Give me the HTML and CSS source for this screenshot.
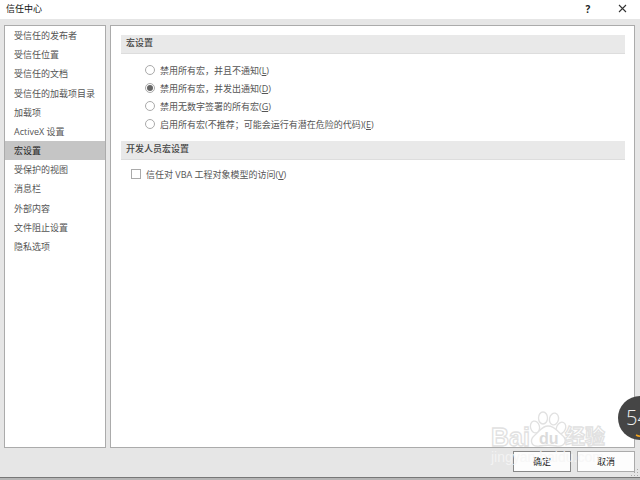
FILE: index.html
```html
<!DOCTYPE html>
<html lang="zh-CN">

<head>
    <meta charset="utf-8">
    <title>信任中心</title>
    <link rel="stylesheet" href="styles.css">
</head>

<body>

    <div class="dialog">
        <header class="titlebar">
            <h1>信任中心</h1>
            <button class="help" aria-label="帮助">?</button>
            <button class="close" aria-label="关闭">
                <svg width="9" height="9" viewBox="0 0 9 9"><path d="M1 1L8 8M8 1L1 8" stroke="#333" stroke-width="1.1"/></svg>
            </button>
        </header>

        <div class="content">
            <nav class="sidebar">
                <ul>
                    <li><a href="#">受信任的发布者</a></li>
                    <li><a href="#">受信任位置</a></li>
                    <li><a href="#">受信任的文档</a></li>
                    <li><a href="#">受信任的加载项目录</a></li>
                    <li><a href="#">加载项</a></li>
                    <li><a href="#">ActiveX 设置</a></li>
                    <li class="active"><a href="#">宏设置</a></li>
                    <li><a href="#">受保护的视图</a></li>
                    <li><a href="#">消息栏</a></li>
                    <li><a href="#">外部内容</a></li>
                    <li><a href="#">文件阻止设置</a></li>
                    <li><a href="#">隐私选项</a></li>
                </ul>
            </nav>

            <main class="panel">
                <h2>宏设置</h2>
                <div class="options">
                    <label><input type="radio" name="macro"><span>禁用所有宏，并且不通知(<u>L</u>)</span></label>
                    <label><input type="radio" name="macro" checked><span>禁用所有宏，并发出通知(<u>D</u>)</span></label>
                    <label><input type="radio" name="macro"><span>禁用无数字签署的所有宏(<u>G</u>)</span></label>
                    <label><input type="radio" name="macro"><span>启用所有宏(不推荐；可能会运行有潜在危险的代码)(<u>E</u>)</span></label>
                </div>

                <h2>开发人员宏设置</h2>
                <label class="trust"><input type="checkbox"><span>信任对 VBA 工程对象模型的访问(<u>V</u>)</span></label>
            </main>
        </div>

        <footer class="buttons">
            <button class="ok">确定</button>
            <button>取消</button>
        </footer>
        <div class="taskbar"></div>

        <!-- Resize grip -->
        <svg class="grip" width="8" height="8" viewBox="0 0 8 8" fill="#aaa">
            <path d="M6 0h1v1h-1zM3 3h1v1h-1zM6 3h1v1h-1zM0 6h1v1h-1zM3 6h1v1h-1zM6 6h1v1h-1z"/>
        </svg>

        <!-- Watermark -->
        <svg class="watermark" width="130" height="60" viewBox="0 0 130 60">
            <g fill="#fff" stroke="#dcdcdc" stroke-width="1.3">
                <ellipse cx="46" cy="18" rx="4.5" ry="6" transform="rotate(-15 46 18)"/>
                <ellipse cx="54" cy="9" rx="4.5" ry="6"/>
                <ellipse cx="65" cy="10" rx="4.5" ry="6" transform="rotate(12 65 10)"/>
                <ellipse cx="72" cy="19" rx="4.5" ry="6" transform="rotate(24 72 19)"/>
                <path d="M59 17C53 17 51 22 46 26C40 31 42 38 50 37C56 36 62 36 68 37C76 38 79 31 73 26C68 22 66 17 59 17Z"/>
                <text class="mark-bai" x="2" y="37">Bai</text>
                <text class="mark-name" x="76" y="35">经验</text>
            </g>
            <text class="mark-du" x="50" y="35">du</text>
            <text class="mark-url" x="2" y="53">jingyan.baidu.com</text>
        </svg>

        <!-- Floating meter -->
        <div class="meter">
            <svg width="44" height="44" viewBox="0 0 44 44">
                <circle cx="22" cy="22" r="22" fill="#454545"/>
                <path d="M18 39Q22 41 26 40" fill="none" stroke="#f0a21c" stroke-width="1.5"/>
                <text class="meter-value" x="8" y="29">54</text>
            </svg>
        </div>
    </div>

</body>

</html>
```
FILE: styles.css
```css
* {
    box-sizing: border-box;
}

body {
    margin: 0;
    font-family: "Open Sans", "Noto Sans CJK SC", sans-serif;
    font-size: 9px;
    color: #555;
}

.dialog {
    position: relative;
    display: flex;
    flex-direction: column;
    min-height: 100vh;
    overflow: hidden;
    background-color: #e6e6e6;
}

.titlebar {
    display: flex;
    align-items: center;
    height: 19px;
    padding: 0 12px 2px 6px;
    background-color: #fff;
}

h1 {
    flex: 1;
    margin: 0;
    font-size: 9px;
    font-weight: normal;
    color: #111;
}

.titlebar button {
    display: flex;
    align-items: center;
    justify-content: center;
    width: 12px;
    height: 16px;
    padding: 0;
    border: none;
    background: none;
    color: #222;
    font-family: "Open Sans", sans-serif;
    font-size: 10px;
    font-weight: bold;
}

.titlebar .help {
    margin-right: 22px;
}

.content {
    flex: 1;
    display: flex;
    gap: 4px;
    padding: 6px 5px 0 4px;
}

.sidebar,
.panel {
    border: 1px solid #ababab;
    background-color: #fff;
}

.sidebar {
    width: 102px;
}

.sidebar ul {
    display: grid;
    grid-auto-rows: 1fr;
    height: 230px;
    margin: 0;
    padding: 0;
    list-style: none;
}

.sidebar a {
    display: flex;
    align-items: center;
    height: 100%;
    padding-left: 9px;
    color: #555;
    text-decoration: none;
    white-space: nowrap;
}

.sidebar .active {
    background-color: #c5c5c5;
}

.sidebar .active a {
    color: #222;
}

.panel {
    flex: 1;
    padding: 9px 9px 9px 10px;
}

h2 {
    height: 19px;
    margin: 0;
    padding-left: 5px;
    border-bottom: 1px solid #ddd;
    background-color: #e9e9e9;
    color: #444;
    font-size: 9px;
    font-weight: 500;
    line-height: 16px;
}

.options {
    padding: 7px 0 8px 24px;
}

label {
    display: flex;
    align-items: center;
    gap: 5px;
    height: 18px;
}

.trust {
    margin-top: 5px;
    padding-left: 10px;
}

input {
    display: grid;
    place-items: center;
    width: 10px;
    height: 10px;
    margin: 0;
    border: 1px solid #aaa;
    background-color: #fff;
    appearance: none;
}

input[type="radio"] {
    border-radius: 50%;
}

input[type="radio"]:checked::before {
    content: "";
    width: 6px;
    height: 6px;
    border-radius: 50%;
    background-color: #666;
}

.buttons {
    display: flex;
    justify-content: flex-end;
    gap: 6px;
    padding: 3px 5px 5px;
}

.buttons button {
    width: 58px;
    height: 21px;
    padding: 0;
    border: 1px solid #ababab;
    background-color: #fdfdfd;
    color: #222;
    font-family: inherit;
    font-size: 9px;
}

.buttons .ok {
    border-color: #888;
}

.taskbar {
    height: 3px;
    border-top: 1px solid #777;
    background-color: #b5b5b5;
}

.grip {
    position: absolute;
    right: 1px;
    bottom: 3px;
}

.watermark {
    position: absolute;
    right: 21px;
    bottom: 11px;
    opacity: 0.85;
    pointer-events: none;
}

.mark-bai {
    font: bold 25px "Liberation Sans", sans-serif;
}

.mark-name {
    font: bold 20px "Noto Sans CJK SC", sans-serif;
}

.mark-du {
    font: bold 16px "Liberation Sans", sans-serif;
    fill: #d5d5d5;
}

.mark-url {
    font: 14px "Liberation Sans", sans-serif;
    fill: #f6f6f6;
}

.meter {
    position: absolute;
    right: -22px;
    bottom: 40px;
    height: 44px;
}

.meter-value {
    font: 300 20px "Open Sans", sans-serif;
    fill: #eee;
}
```
